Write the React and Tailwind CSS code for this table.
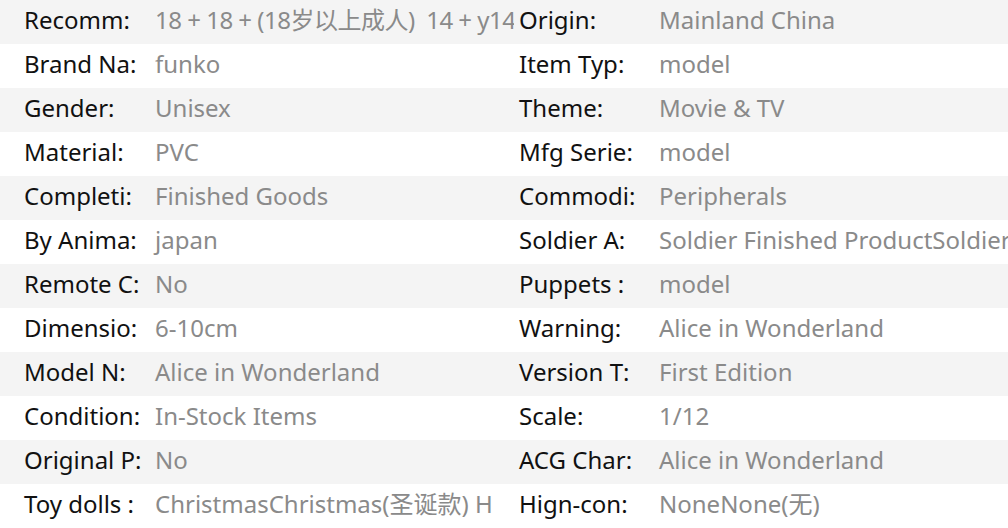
import React from "react";

const rows = [
  ["Recomm:", "18 + 18 + (18岁以上成人)  14 + y14", "Origin:", "Mainland China"],
  ["Brand Na:", "funko", "Item Typ:", "model"],
  ["Gender:", "Unisex", "Theme:", "Movie & TV"],
  ["Material:", "PVC", "Mfg Serie:", "model"],
  ["Completi:", "Finished Goods", "Commodi:", "Peripherals"],
  ["By Anima:", "japan", "Soldier A:", "Soldier Finished ProductSoldier"],
  ["Remote C:", "No", "Puppets :", "model"],
  ["Dimensio:", "6-10cm", "Warning:", "Alice in Wonderland"],
  ["Model N:", "Alice in Wonderland", "Version T:", "First Edition"],
  ["Condition:", "In-Stock Items", "Scale:", "1/12"],
  ["Original P:", "No", "ACG Char:", "Alice in Wonderland"],
  ["Toy dolls :", "ChristmasChristmas(圣诞款) H", "Hign-con:", "NoneNone(无)"],
];

export default function App() {
  return (
    <div
      className="w-[1008px] h-[528px] overflow-hidden bg-white text-[24px] leading-[40px]"
      style={{ fontFamily: '"Noto Sans", "Noto Sans CJK SC", sans-serif' }}
    >
      {rows.map((r, i) => (
        <div
          key={i}
          className={`flex h-[44px] whitespace-nowrap ${i % 2 === 0 ? "bg-[#f4f4f4]" : "bg-white"}`}
        >
          <div className="flex w-[514px] shrink-0 overflow-hidden pl-6">
            <span className="w-[131px] shrink-0 text-[#111111]">{r[0]}</span>
            <span className={`text-[#8a8a8a] ${i === 0 ? "whitespace-pre tracking-[-0.5px]" : ""}`}>{r[1]}</span>
          </div>
          <div className="flex flex-1 overflow-hidden pl-[5px]">
            <span className="w-[140px] shrink-0 text-[#111111]">{r[2]}</span>
            <span className="text-[#8a8a8a]">{r[3]}</span>
          </div>
        </div>
      ))}
    </div>
  );
}
